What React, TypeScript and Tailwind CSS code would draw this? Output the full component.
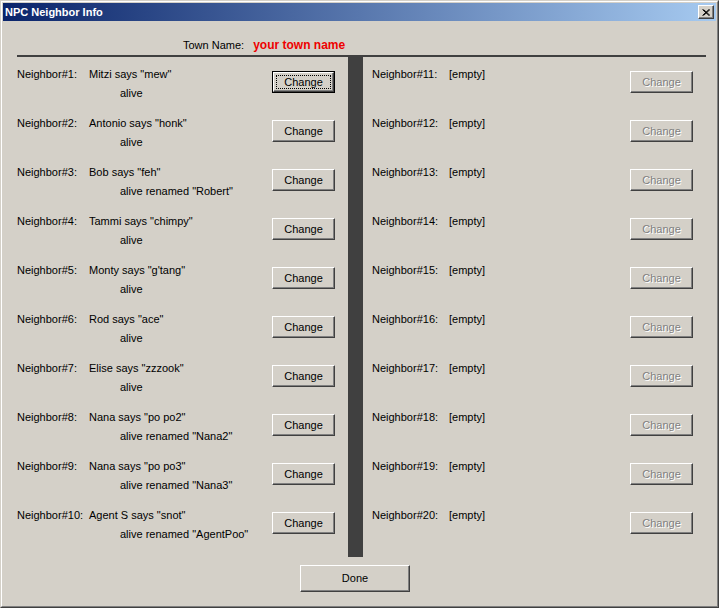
import React from 'react'

const left = [
  { n: 1, says: 'Mitzi says "mew"', status: 'alive' },
  { n: 2, says: 'Antonio says "honk"', status: 'alive' },
  { n: 3, says: 'Bob says "feh"', status: 'alive renamed "Robert"' },
  { n: 4, says: 'Tammi says "chimpy"', status: 'alive' },
  { n: 5, says: 'Monty says "g\'tang"', status: 'alive' },
  { n: 6, says: 'Rod says "ace"', status: 'alive' },
  { n: 7, says: 'Elise says "zzzook"', status: 'alive' },
  { n: 8, says: 'Nana says "po po2"', status: 'alive renamed "Nana2"' },
  { n: 9, says: 'Nana says "po po3"', status: 'alive renamed "Nana3"' },
  { n: 10, says: 'Agent S says "snot"', status: 'alive renamed "AgentPoo"' },
]

const right = Array.from({ length: 10 }, (_, i) => i + 11)

function WinButton({ label, disabled, focused, className = '' }: { label: string; disabled?: boolean; focused?: boolean; className?: string }) {
  if (focused) {
    return (
      <div className={`border border-black bg-[#d4d0c8] ${className}`}>
        <div className="h-full w-full border border-t-white border-l-white border-r-[#404040] border-b-[#404040] shadow-[inset_-1px_-1px_0_#808080] p-[2px]">
          <div className="flex h-full w-full items-center justify-center border border-dotted border-black">
            {label}
          </div>
        </div>
      </div>
    )
  }
  return (
    <div
      className={`flex items-center justify-center bg-[#d4d0c8] border border-t-white border-l-white border-r-[#404040] border-b-[#404040] shadow-[inset_-1px_-1px_0_#808080] ${
        disabled ? 'text-[#808080] [text-shadow:1px_1px_0_#ffffff]' : 'text-black'
      } ${className}`}
    >
      {label}
    </div>
  )
}

export default function App() {
  return (
    <div className="h-[608px] w-[719px] border border-t-[#d4d0c8] border-l-[#d4d0c8] border-r-[#404040] border-b-[#404040] bg-[#d4d0c8] font-['Liberation_Sans',Arial,sans-serif] text-[11px] text-black">
      <div className="flex h-full w-full flex-col border border-t-white border-l-white border-r-[#808080] border-b-[#808080] p-px">
        {/* title bar */}
        <div className="flex h-[18px] items-center justify-between bg-[linear-gradient(90deg,#0a246a_0%,#a6caf0_100%)] pl-[2px] pr-[2px]">
          <span className="text-[11px] font-bold text-white">NPC Neighbor Info</span>
          <div className="flex h-[14px] w-[16px] items-center justify-center border border-t-white border-l-white border-r-[#404040] border-b-[#404040] bg-[#d4d0c8] shadow-[inset_-1px_-1px_0_#808080]">
            <svg width="8" height="7" viewBox="0 0 8 7">
              <path d="M0.5 0.5 L7 6.5 M1.5 0.5 L8 6.5 M7 0.5 L0.5 6.5 M8 0.5 L1.5 6.5" stroke="#000" strokeWidth="1" />
            </svg>
          </div>
        </div>

        {/* body */}
        <div className="flex flex-1 flex-col">
          <div className="mt-[14px] flex h-[20px] items-center gap-[9px] pl-[180px]">
            <span>Town Name:</span>
            <span className="text-[12px] font-bold text-[#ee0000]">your town name</span>
          </div>
          <div className="ml-[14px] h-[2px] w-[689px] bg-[#404040]" />

          <div className="flex h-[500px]">
            <div className="w-[345px] pl-[14px] pt-[8px]">
              {left.map(r => (
                <div key={r.n} className="flex h-[49px]">
                  <div className="w-[72px] leading-[19px]">Neighbor#{r.n}:</div>
                  <div className="w-[183px] leading-[19px]">
                    <div>{r.says}</div>
                    <div className="pl-[31px]">{r.status}</div>
                  </div>
                  <WinButton label="Change" focused={r.n === 1} className="mt-[6px] h-[22px] w-[63px]" />
                </div>
              ))}
            </div>
            <div className="-mt-px w-[15px] bg-[#404040]" />
            <div className="pl-[9px] pt-[8px]">
              {right.map(n => (
                <div key={n} className="flex h-[49px]">
                  <div className="w-[77px] leading-[19px]">Neighbor#{n}:</div>
                  <div className="w-[181px] leading-[19px]">[empty]</div>
                  <WinButton label="Change" disabled className="mt-[6px] h-[22px] w-[63px]" />
                </div>
              ))}
            </div>
          </div>

          <div className="mt-[8px] pl-[297px]">
            <WinButton label="Done" className="h-[27px] w-[110px]" />
          </div>
        </div>
      </div>
    </div>
  )
}
